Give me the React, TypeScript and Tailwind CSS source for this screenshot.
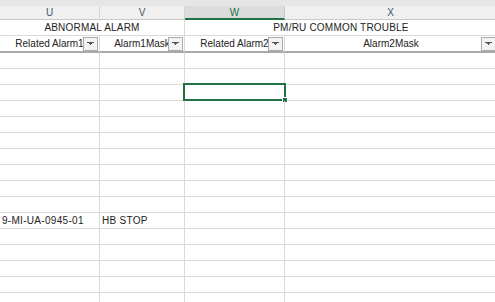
import React from 'react'

const cols = [
  { id: 'U', w: 'w-[100px]' },
  { id: 'V', w: 'w-[85px]' },
  { id: 'W', w: 'w-[100px]' },
  { id: 'X', w: 'w-[212px]' },
]

const FilterBtn = () => (
  <div className='absolute right-[1px] top-[1px] h-[14px] w-[15px] border border-[#ababab] bg-[#f3f3f3] flex items-center justify-center'>
    <svg width='7' height='4' viewBox='0 0 7 4'>
      <rect x='0' y='0' width='7' height='1' fill='#555' />
      <rect x='2' y='1' width='3' height='1' fill='#555' />
      <rect x='3' y='2' width='1' height='1' fill='#555' />
    </svg>
  </div>
)

const FilterCell = ({ label, width, last }: { label: string; width: string; last?: boolean }) => (
  <div className={`relative h-[17px] ${width} shrink-0 border-b-2 border-b-[#a9a9a9] ${last ? '' : 'border-r border-r-[#dadada]'} overflow-hidden`}>
    <div className='h-[15px] leading-[16px] text-center whitespace-nowrap'>{label}</div>
    <FilterBtn />
  </div>
)

export default function App() {
  const rows = Array.from({ length: 16 }, (_, i) => i)

  return (
    <div className='w-[495px] h-[302px] overflow-hidden bg-white text-[10px] text-[#222] font-["Liberation_Sans",Arial,sans-serif]'>
      {/* top strip */}
      <div className='h-[6px] bg-[#e6e6e6]' />

      {/* column headers */}
      <div className='flex h-[14px] w-[497px]'>
        {cols.map((c) =>
          c.id === 'W' ? (
            <div key={c.id} className={`${c.w} shrink-0 bg-[#dcdcdc] border-r border-r-[#c8c8c8] border-b-2 border-b-[#217346] text-[#217346] text-center leading-[13px]`}>
              {c.id}
            </div>
          ) : (
            <div key={c.id} className={`${c.w} shrink-0 bg-[#f0f0f0] border-r border-r-[#d4d4d4] border-b border-b-[#c8c8c8] text-[#44546a] text-center leading-[14px]`}>
              {c.id}
            </div>
          )
        )}
      </div>

      {/* group titles */}
      <div className='flex h-[16px] w-[497px]'>
        <div className='w-[185px] shrink-0 border-r border-b border-[#dadada] text-center leading-[16px] tracking-[0.2px]'>ABNORMAL ALARM</div>
        <div className='w-[312px] shrink-0 border-b border-[#dadada] text-center leading-[16px] tracking-[0.2px]'>PM/RU COMMON TROUBLE</div>
      </div>

      {/* filter header row */}
      <div className='flex w-[497px]'>
        <FilterCell label='Related Alarm1' width='w-[100px]' />
        <FilterCell label='Alarm1Mask' width='w-[85px]' />
        <FilterCell label='Related Alarm2' width='w-[100px]' />
        <FilterCell label='Alarm2Mask' width='w-[212px]' last />
      </div>

      {/* body rows */}
      {rows.map((r) => (
        <div key={r} className='flex h-[16px] w-[497px]'>
          <div className='w-[100px] shrink-0 border-r border-b border-[#dadada] pl-[2px] leading-[16px] tracking-[0.3px] whitespace-nowrap overflow-hidden'>
            {r === 10 ? '9-MI-UA-0945-01' : ''}
          </div>
          <div className='w-[85px] shrink-0 border-r border-b border-[#dadada] pl-[2px] leading-[16px] tracking-[0.3px] whitespace-nowrap overflow-hidden'>
            {r === 10 ? 'HB STOP' : ''}
          </div>
          <div className='relative w-[100px] shrink-0 border-r border-b border-[#dadada]'>
            {r === 2 && (
              <>
                <div className='absolute -left-[2px] -top-[2px] w-[103px] h-[18px] border-2 border-[#217346]' />
                <div className='absolute left-[97px] top-[12px] w-[6px] h-[6px] bg-[#217346] border border-white' />
              </>
            )}
          </div>
          <div className='w-[212px] shrink-0 border-b border-[#dadada]' />
        </div>
      ))}
    </div>
  )
}
